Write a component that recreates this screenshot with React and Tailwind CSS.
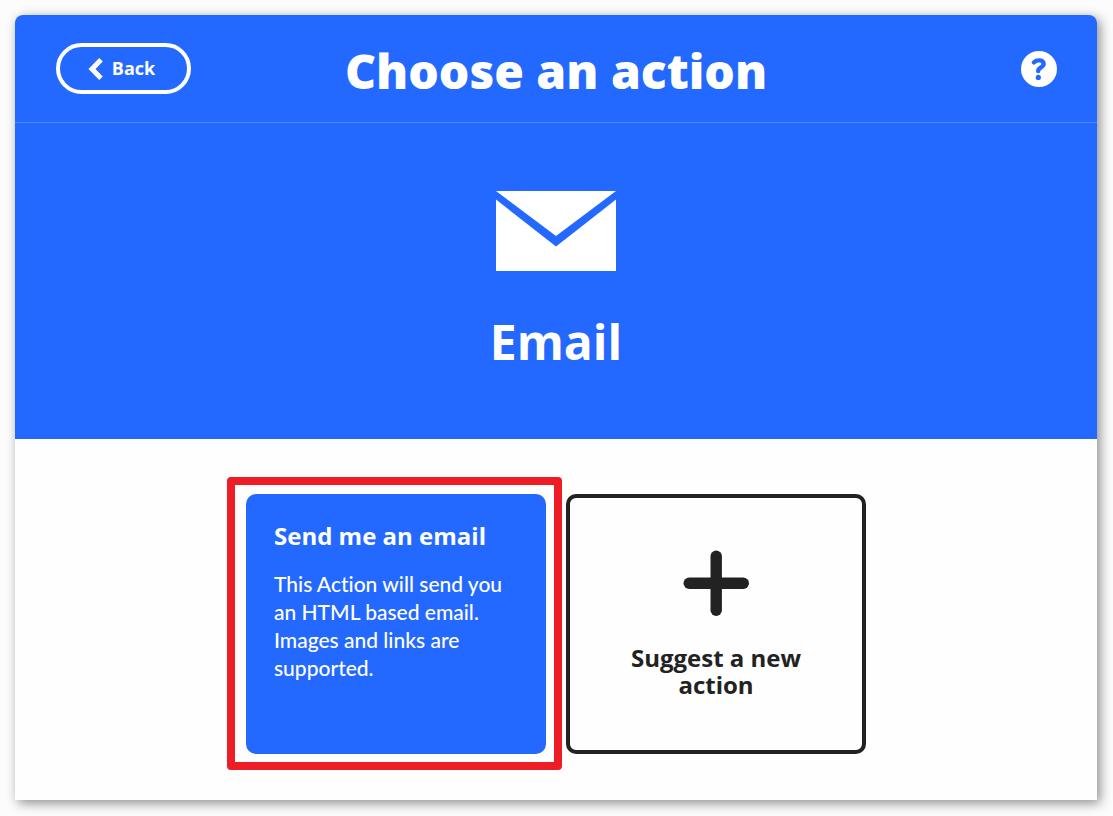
import React from "react";

function EnvelopeIcon() {
  return (
    <svg className="h-20 w-[120px]" viewBox="0 0 120 80" fill="currentColor" aria-hidden="true">
      <path d="M0 0H120L60 45Z" />
      <path d="M0 8.5L60 55.5L120 8.5V80H0Z" />
    </svg>
  );
}

function PlusIcon() {
  return (
    <svg className="size-[66px]" viewBox="0 0 66 66" fill="currentColor" aria-hidden="true">
      <rect x="27.5" y="0.5" width="11.4" height="65.5" rx="5.7" />
      <rect x="0.5" y="27.5" width="65.5" height="11.4" rx="5.7" />
    </svg>
  );
}

function ChevronIcon() {
  return (
    <svg className="h-[22px] w-4" viewBox="0 0 16 22" fill="none" stroke="currentColor" strokeWidth="5" aria-hidden="true">
      <path d="M13 1.8L4 11L13 20.2" />
    </svg>
  );
}

function HelpIcon() {
  return (
    <svg className="size-9" viewBox="0 0 36 36" aria-hidden="true">
      <circle cx="18" cy="18" r="18" fill="currentColor" />
      <path
        d="M12.9 11.3C14.4 10 16 9.4 17.9 9.4C20.8 9.4 22.6 10.8 22.6 13C22.6 16.6 17.2 16.2 17.2 20"
        fill="none"
        stroke="#2469ff"
        strokeWidth="4.4"
        strokeLinecap="round"
        strokeLinejoin="round"
      />
      <circle cx="17.3" cy="26.4" r="2.6" fill="#2469ff" />
    </svg>
  );
}

export default function App() {
  return (
    <div className="min-h-screen bg-[#fcfcfc] pt-[15px] pr-4 pb-4 pl-[15px] font-['Open_Sans',sans-serif] text-[#222222]">
      <main className="rounded-t-lg bg-[#fefefe] shadow-[3px_3px_12px_rgba(0,0,0,0.45)]">
        <header className="grid grid-cols-[1fr_auto_1fr] items-center rounded-t-lg border-b border-[#4d86ff] bg-[#2469ff] px-10 py-7 text-white">
          <button
            type="button"
            className="ml-px flex h-[51px] w-[135px] items-center justify-center gap-2 justify-self-start rounded-full border-4 border-white pr-1 text-lg leading-6 font-bold"
          >
            <ChevronIcon />
            <span className="pb-0.5">Back</span>
          </button>
          <h1 className="pt-1 text-5xl leading-[47px] font-extrabold">Choose an action</h1>
          <button type="button" aria-label="Help" className="justify-self-end">
            <HelpIcon />
          </button>
        </header>

        <section className="flex flex-col items-center gap-10 bg-[#2469ff] pt-[68px] pb-[66px] text-white">
          <EnvelopeIcon />
          <h2 className="text-5xl leading-[62px] font-bold">Email</h2>
        </section>

        <section className="flex flex-wrap justify-center gap-5 px-5 pt-[55px] pb-[46px]">
          <div className="relative">
            <button
              type="button"
              className="flex h-[260px] w-[300px] flex-col gap-5 rounded-[10px] bg-[#2469ff] p-7 text-left text-white"
            >
              <span className="text-2xl leading-7 font-bold">Send me an email</span>
              <span className="pr-3 font-['Lato',sans-serif] text-[21px] leading-7 font-medium [font-variant-ligatures:none]">
                This Action will send you an HTML based email. Images and links are supported.
              </span>
            </button>
            <div className="pointer-events-none absolute -top-[17px] -right-4 -bottom-4 -left-[19px] rounded-[4px] border-8 border-[#ee1c25]" />
          </div>
          <button
            type="button"
            className="flex h-[260px] w-[300px] flex-col items-center justify-center gap-7 rounded-[10px] border-4 border-[#222222] px-12 text-center"
          >
            <PlusIcon />
            <span className="text-2xl leading-[27px] font-bold">Suggest a new action</span>
          </button>
        </section>
      </main>
    </div>
  );
}
